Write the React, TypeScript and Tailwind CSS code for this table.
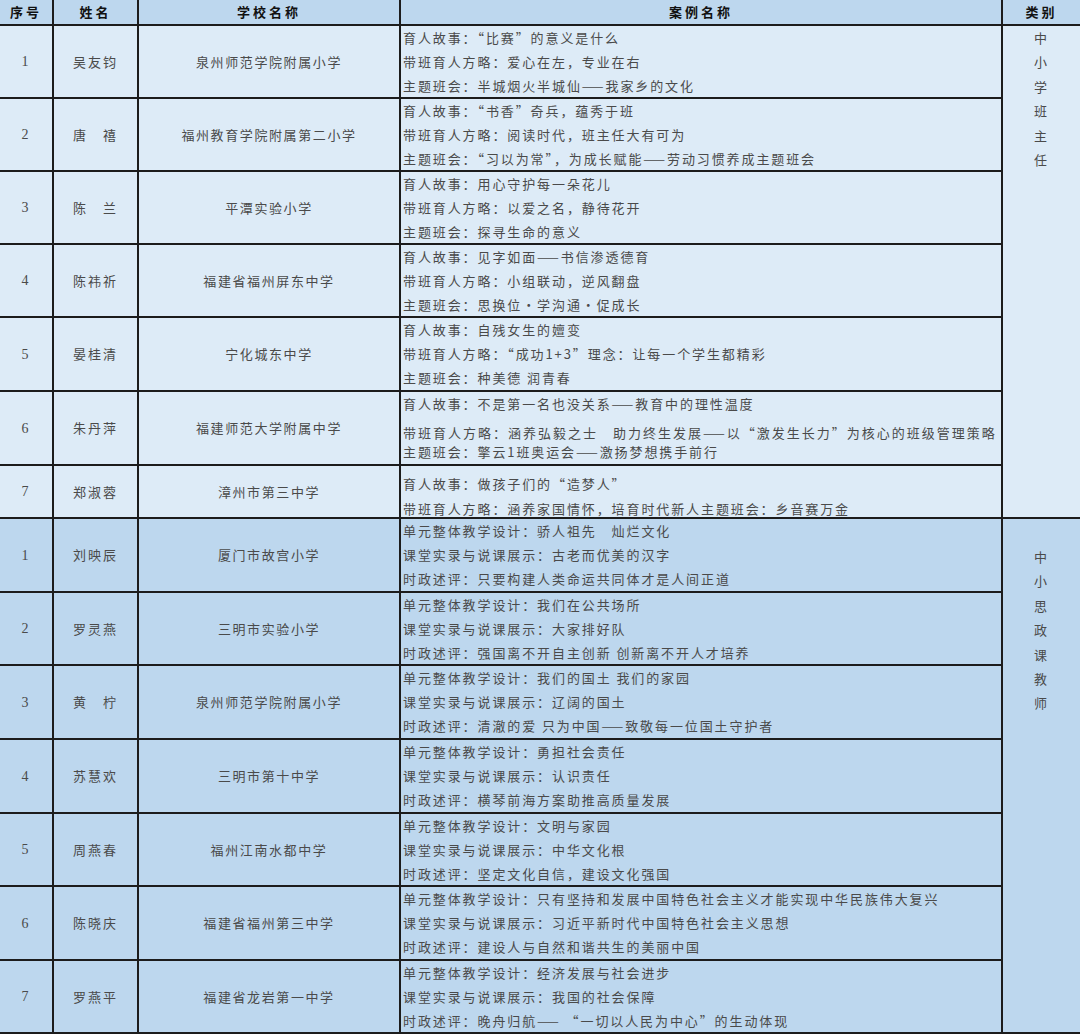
const FONT = "font-['Noto_Sans_CJK_SC',sans-serif]";

type Row = {
  no: string;
  name: string;
  school: string;
  cases: string[];
  h: string;
  special?: boolean;
};

const group1: Row[] = [
  {
    no: "1",
    name: "吴友钧",
    school: "泉州师范学院附属小学",
    cases: ["育人故事：“比赛”的意义是什么", "带班育人方略：爱心在左，专业在右", "主题班会：半城烟火半城仙——我家乡的文化"],
    h: "h-[73px]",
  },
  {
    no: "2",
    name: "唐　禧",
    school: "福州教育学院附属第二小学",
    cases: ["育人故事：“书香”奇兵，蕴秀于班", "带班育人方略：阅读时代，班主任大有可为", "主题班会：“习以为常”，为成长赋能——劳动习惯养成主题班会"],
    h: "h-[73px]",
  },
  {
    no: "3",
    name: "陈　兰",
    school: "平潭实验小学",
    cases: ["育人故事：用心守护每一朵花儿", "带班育人方略：以爱之名，静待花开", "主题班会：探寻生命的意义"],
    h: "h-[73px]",
  },
  {
    no: "4",
    name: "陈祎祈",
    school: "福建省福州屏东中学",
    cases: ["育人故事：见字如面——书信渗透德育", "带班育人方略：小组联动，逆风翻盘", "主题班会：思换位·学沟通·促成长"],
    h: "h-[73px]",
  },
  {
    no: "5",
    name: "晏桂清",
    school: "宁化城东中学",
    cases: ["育人故事：自残女生的嬗变", "带班育人方略：“成功1+3”理念：让每一个学生都精彩", "主题班会：种美德 润青春"],
    h: "h-[74px]",
  },
  {
    no: "6",
    name: "朱丹萍",
    school: "福建师范大学附属中学",
    cases: [
      "育人故事：不是第一名也没关系——教育中的理性温度",
      "带班育人方略：涵养弘毅之士　助力终生发展——以“激发生长力”为核心的班级管理策略",
      "主题班会：擎云1班奥运会——激扬梦想携手前行",
    ],
    h: "h-[74px]",
    special: true,
  },
  {
    no: "7",
    name: "郑淑蓉",
    school: "漳州市第三中学",
    cases: ["育人故事：做孩子们的“造梦人”", "带班育人方略：涵养家国情怀，培育时代新人主题班会：乡音赛万金"],
    h: "h-[53px]",
  },
];

const group2: Row[] = [
  {
    no: "1",
    name: "刘映辰",
    school: "厦门市故宫小学",
    cases: ["单元整体教学设计：骄人祖先　灿烂文化", "课堂实录与说课展示：古老而优美的汉字", "时政述评：只要构建人类命运共同体才是人间正道"],
    h: "h-[74px]",
  },
  {
    no: "2",
    name: "罗灵燕",
    school: "三明市实验小学",
    cases: ["单元整体教学设计：我们在公共场所", "课堂实录与说课展示：大家排好队", "时政述评：强国离不开自主创新 创新离不开人才培养"],
    h: "h-[73px]",
  },
  {
    no: "3",
    name: "黄　柠",
    school: "泉州师范学院附属小学",
    cases: ["单元整体教学设计：我们的国土 我们的家园", "课堂实录与说课展示：辽阔的国土", "时政述评：清澈的爱 只为中国——致敬每一位国土守护者"],
    h: "h-[74px]",
  },
  {
    no: "4",
    name: "苏慧欢",
    school: "三明市第十中学",
    cases: ["单元整体教学设计：勇担社会责任", "课堂实录与说课展示：认识责任", "时政述评：横琴前海方案助推高质量发展"],
    h: "h-[74px]",
  },
  {
    no: "5",
    name: "周燕春",
    school: "福州江南水都中学",
    cases: ["单元整体教学设计：文明与家园", "课堂实录与说课展示：中华文化根", "时政述评：坚定文化自信，建设文化强国"],
    h: "h-[73px]",
  },
  {
    no: "6",
    name: "陈晓庆",
    school: "福建省福州第三中学",
    cases: [
      "单元整体教学设计：只有坚持和发展中国特色社会主义才能实现中华民族伟大复兴",
      "课堂实录与说课展示：习近平新时代中国特色社会主义思想",
      "时政述评：建设人与自然和谐共生的美丽中国",
    ],
    h: "h-[74px]",
  },
  {
    no: "7",
    name: "罗燕平",
    school: "福建省龙岩第一中学",
    cases: ["单元整体教学设计：经济发展与社会进步", "课堂实录与说课展示：我国的社会保障", "时政述评：晚舟归航—— “一切以人民为中心”的生动体现"],
    h: "h-[73px]",
  },
];

function CaseCell({ row }: { row: Row }) {
  if (row.special) {
    return (
      <div className="w-[602px] border-r-2 border-[#1c1c1c] pl-[2px] flex flex-col">
        <div className="leading-[24px]">{row.cases[0]}</div>
        <div className="leading-[19px] mt-[7px] whitespace-nowrap tracking-[2px]">{row.cases[1]}</div>
        <div className="leading-[19px]">{row.cases[2]}</div>
      </div>
    );
  }
  return (
    <div
      className={
        "w-[602px] border-r-2 border-[#1c1c1c] pl-[2px] flex flex-col " +
        (row.cases.length === 2 ? "pt-[6px] gap-[1px]" : "justify-center")
      }
    >
      {row.cases.map((c) => (
        <div key={c} className="leading-[24px] whitespace-nowrap">
          {c}
        </div>
      ))}
    </div>
  );
}

function TableRow({ row }: { row: Row }) {
  return (
    <div className={"flex border-b-2 border-[#1c1c1c] " + row.h}>
      <div className="w-[54px] border-r-2 border-[#1c1c1c] flex items-center justify-center font-['Liberation_Serif',serif] text-[14px]">
        {row.no}
      </div>
      <div className="w-[85px] border-r-2 border-[#1c1c1c] flex items-center justify-center tracking-[2px]">
        {row.name}
      </div>
      <div className="w-[262px] border-r-2 border-[#1c1c1c] flex items-center justify-center tracking-[1.6px]">
        {row.school}
      </div>
      <CaseCell row={row} />
    </div>
  );
}

function Group({ rows, label, bg, pad }: { rows: Row[]; label: string; bg: string; pad: string }) {
  return (
    <div className={"flex " + bg}>
      <div className="flex flex-col w-[1003px]">
        {rows.map((r) => (
          <TableRow key={r.no + r.name} row={r} />
        ))}
      </div>
      <div className={"flex-1 border-b-2 border-[#1c1c1c] flex flex-col items-center " + pad}>
        {label.split("").map((ch, i) => (
          <div key={i} className="leading-[24.4px]">
            {ch}
          </div>
        ))}
      </div>
    </div>
  );
}

export default function App() {
  return (
    <div className={"w-[1080px] h-[1034px] overflow-hidden bg-white text-[13px] text-[#4a4a4a] tracking-[1.9px] " + FONT}>
      {/* 表头 */}
      <div className="flex h-[26px] bg-[#bdd7ee] border-b-2 border-[#1c1c1c] font-bold text-[#111] tracking-[3px]">
        <div className="w-[54px] border-r-2 border-[#1c1c1c] flex items-center justify-center">序号</div>
        <div className="w-[85px] border-r-2 border-[#1c1c1c] flex items-center justify-center">姓名</div>
        <div className="w-[262px] border-r-2 border-[#1c1c1c] flex items-center justify-center">学校名称</div>
        <div className="w-[602px] border-r-2 border-[#1c1c1c] flex items-center justify-center">案例名称</div>
        <div className="flex-1 flex items-center justify-center">类别</div>
      </div>
      <Group rows={group1} label="中小学班主任" bg="bg-[#ddebf7]" pad="pt-0" />
      <Group rows={group2} label="中小思政课教师" bg="bg-[#bdd7ee]" pad="pt-[26px]" />
    </div>
  );
}
